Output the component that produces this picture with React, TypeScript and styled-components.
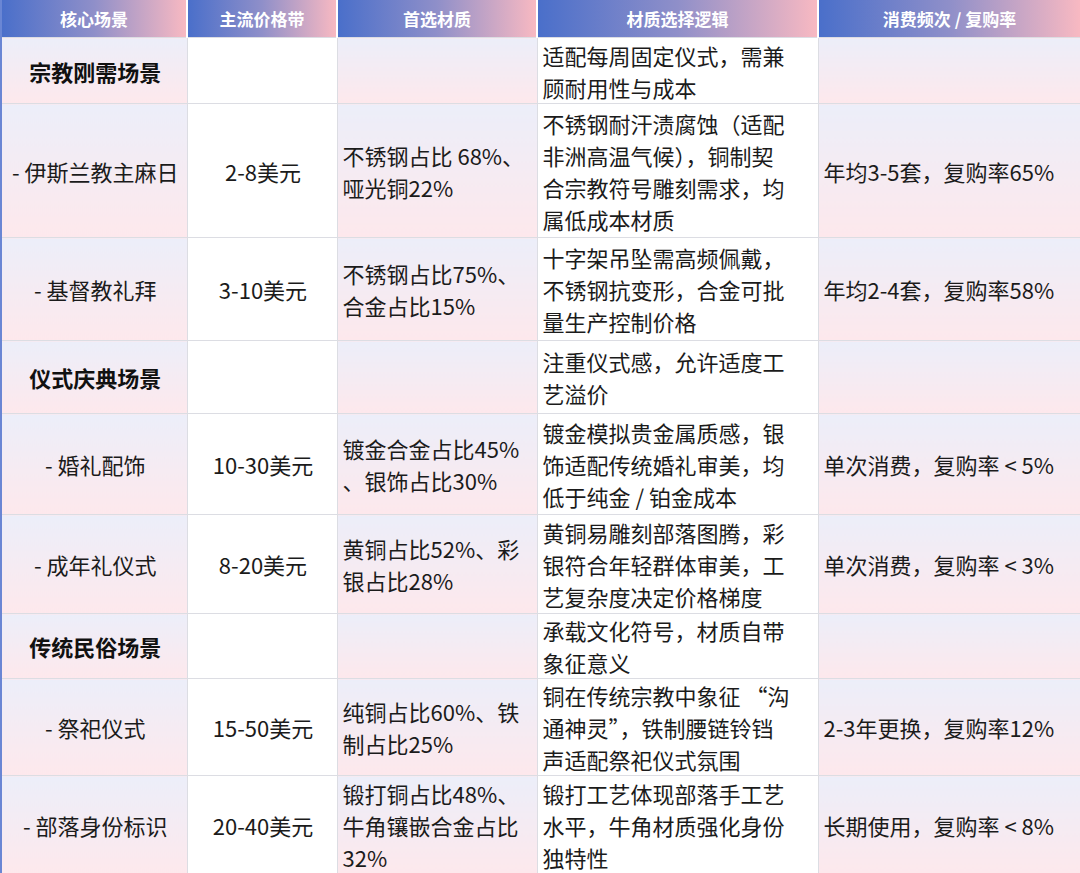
import styled, { createGlobalStyle } from "styled-components";

type Row = {
  scene: string;
  section?: boolean;
  price?: string;
  material?: string;
  logic: string;
  freq?: string;
  height: number;
};

const headers = ["核心场景", "主流价格带", "首选材质", "材质选择逻辑", "消费频次 / 复购率"];
const widths = [186, 150, 200, 281, 263];

const rows: Row[] = [
  { scene: "宗教刚需场景", section: true, logic: "适配每周固定仪式，需兼\n顾耐用性与成本", height: 66 },
  {
    scene: "- 伊斯兰教主麻日",
    price: "2-8美元",
    material: "不锈钢占比 68%、\n哑光铜22%",
    logic: "不锈钢耐汗渍腐蚀（适配\n非洲高温气候），铜制契\n合宗教符号雕刻需求，均\n属低成本材质",
    freq: "年均3-5套，复购率65%",
    height: 134,
  },
  {
    scene: "- 基督教礼拜",
    price: "3-10美元",
    material: "不锈钢占比75%、\n合金占比15%",
    logic: "十字架吊坠需高频佩戴，\n不锈钢抗变形，合金可批\n量生产控制价格",
    freq: "年均2-4套，复购率58%",
    height: 103,
  },
  { scene: "仪式庆典场景", section: true, logic: "注重仪式感，允许适度工\n艺溢价", height: 73 },
  {
    scene: "- 婚礼配饰",
    price: "10-30美元",
    material: "镀金合金占比45%\n、银饰占比30%",
    logic: "镀金模拟贵金属质感，银\n饰适配传统婚礼审美，均\n低于纯金 / 铂金成本",
    freq: "单次消费，复购率 < 5%",
    height: 101,
  },
  {
    scene: "- 成年礼仪式",
    price: "8-20美元",
    material: "黄铜占比52%、彩\n银占比28%",
    logic: "黄铜易雕刻部落图腾，彩\n银符合年轻群体审美，工\n艺复杂度决定价格梯度",
    freq: "单次消费，复购率 < 3%",
    height: 99,
  },
  { scene: "传统民俗场景", section: true, logic: "承载文化符号，材质自带\n象征意义", height: 65 },
  {
    scene: "- 祭祀仪式",
    price: "15-50美元",
    material: "纯铜占比60%、铁\n制占比25%",
    logic: "铜在传统宗教中象征 “沟\n通神灵”，铁制腰链铃铛\n声适配祭祀仪式氛围",
    freq: "2-3年更换，复购率12%",
    height: 93,
  },
  {
    scene: "- 部落身份标识",
    price: "20-40美元",
    material: "锻打铜占比48%、\n牛角镶嵌合金占比\n32%",
    logic: "锻打工艺体现部落手工艺\n水平，牛角材质强化身份\n独特性",
    freq: "长期使用，复购率 < 8%",
    height: 99,
  },
];

const GlobalStyle = createGlobalStyle`
  html, body {
    margin: 0;
    padding: 0;
    background: #ffffff;
  }
  body {
    font-family: "Noto Sans CJK SC", "Noto Sans", sans-serif;
    color: #1b1b1b;
  }
`;

const Table = styled.table`
  width: 1080px;
  border-collapse: collapse;
  table-layout: fixed;
  border-left: 2px solid #6a86d4;
  border-right: 2px solid #f2c3cb;
`;

const HeadCell = styled.th`
  height: 37px;
  padding: 0;
  background: linear-gradient(90deg, #4a6fca 0%, #8f8fc9 50%, #f8b9c2 100%);
  color: #ffffff;
  font-size: 17px;
  font-weight: 700;
  text-align: center;
  vertical-align: middle;
  border-right: 2px solid #ffffff;
  &:last-child {
    border-right: none;
  }
`;

const Cell = styled.td<{ $shaded?: boolean; $align?: string; $bold?: boolean }>`
  padding: 0 3px 0 5px;
  font-size: 22px;
  line-height: 32px;
  white-space: pre-line;
  vertical-align: middle;
  text-align: ${(p) => p.$align ?? "left"};
  font-weight: ${(p) => (p.$bold ? 700 : 400)};
  color: ${(p) => (p.$bold ? "#111" : "#1b1b1b")};
  border: 1px solid #dcdde3;
  background: ${(p) =>
    p.$shaded ? "linear-gradient(180deg, #eceef9 0%, #fde8ec 100%)" : "#ffffff"};
`;

export default function App() {
  return (
    <>
      <GlobalStyle />
      <Table>
        <colgroup>
          {widths.map((w, i) => (
            <col key={i} style={{ width: w }} />
          ))}
        </colgroup>
        <thead>
          <tr>
            {headers.map((h) => (
              <HeadCell key={h}>{h}</HeadCell>
            ))}
          </tr>
        </thead>
        <tbody>
          {rows.map((r) => (
            <tr key={r.scene} style={{ height: r.height }}>
              <Cell $shaded $align="center" $bold={r.section}>
                {r.scene}
              </Cell>
              <Cell $align="center">{r.price}</Cell>
              <Cell $shaded>{r.material}</Cell>
              <Cell>{r.logic}</Cell>
              <Cell $shaded>{r.freq}</Cell>
            </tr>
          ))}
        </tbody>
      </Table>
    </>
  );
}
